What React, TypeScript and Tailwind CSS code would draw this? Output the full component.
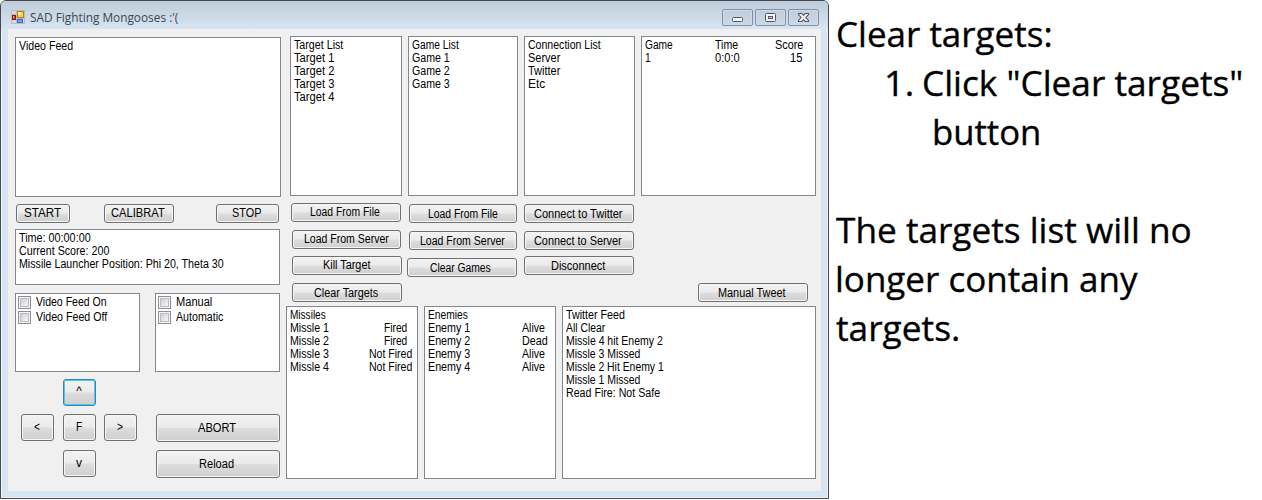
import { useLayoutEffect, useRef, useState } from "react";
import type { ReactNode } from "react";
import clsx from "clsx";

/* A single line of text condensed or widened to an exact width. */
function Fit({ w, children, className }: { w: number; children: string; className?: string }) {
  const ref = useRef<HTMLSpanElement>(null);
  const [scale, setScale] = useState(1);
  useLayoutEffect(() => {
    if (ref.current && ref.current.offsetWidth > 0) {
      setScale(w / ref.current.offsetWidth);
    }
  }, [w, children]);
  return (
    <span className={clsx("block shrink-0 whitespace-nowrap", className)} style={{ width: w }}>
      <span ref={ref} className="inline-block origin-left whitespace-nowrap" style={{ transform: `scaleX(${scale})` }}>
        {children}
      </span>
    </span>
  );
}

function Btn({ label, w, className, focus }: { label: string; w: number; className: string; focus?: boolean }) {
  return (
    <button
      className={clsx(
        "flex shrink-0 items-center justify-center rounded-[3px] border bg-[linear-gradient(to_bottom,#f2f2f2_0%,#ebebeb_48%,#dddddd_52%,#cfcfcf_100%)] leading-[13px]",
        focus
          ? "border-[#3c7fb1] shadow-[inset_0_0_0_1px_#48cdf4]"
          : "border-[#707070] shadow-[inset_0_0_0_1px_#f6f6f6]",
        className,
      )}
    >
      <Fit w={w}>{label}</Fit>
    </button>
  );
}

function Box({ className, children }: { className: string; children?: ReactNode }) {
  return (
    <div className={clsx("shrink-0 border border-[#828790] bg-white pt-[2px] pl-[3px] leading-[13px]", className)}>
      {children}
    </div>
  );
}

function Lines({ rows }: { rows: [string, number][] }) {
  return (
    <>
      {rows.map(([t, w], i) => (
        <Fit key={i} w={w}>{t}</Fit>
      ))}
    </>
  );
}

function Check({ label, w }: { label: string; w: number }) {
  return (
    <div className="flex h-[15px] items-start">
      <span className="mr-[5px] flex size-[13px] items-center justify-center border border-[#8e8f8f] bg-[#f4f4f4]">
        <span className="size-[9px] border border-[#b8bdc4] bg-linear-to-br from-[#cbcfd5] to-[#f6f6f6]" />
      </span>
      <Fit w={w}>{label}</Fit>
    </div>
  );
}

function AppIcon() {
  return (
    <svg width="14" height="14" viewBox="0 0 14 14" className="shrink-0" shapeRendering="crispEdges">
      <path d="M0 0h14v14H0z" fill="#b9bdc1" />
      <path d="M1 1h4v3H1zM1 10h4v3H1zM6 9h7v4H6z" fill="#d3dae0" />
      <rect x="6" y="1" width="7" height="7" fill="#b58218" />
      <rect x="7" y="2" width="5" height="5" fill="#fbcf45" />
      <rect x="7" y="2" width="3" height="3" fill="#fdea9a" />
      <rect x="1" y="5" width="4" height="5" fill="#8d160e" />
      <rect x="2" y="6" width="2" height="3" fill="#d8392a" />
      <rect x="2" y="6" width="1" height="2" fill="#ff9a83" />
      <rect x="6" y="9" width="6" height="4" fill="#3f68b8" />
      <rect x="7" y="10" width="4" height="2" fill="#6ba3f5" />
    </svg>
  );
}

function CaptionButton({ children }: { children: ReactNode }) {
  return (
    <span className="flex h-[17px] w-[31px] items-center justify-center rounded-[2px] border border-[#8090a8] bg-linear-to-b from-[#c0cddb] to-[#cbd8e6] shadow-[inset_0_0_0_1px_#d0dbe8]">
      <svg width="13" height="11" viewBox="0 0 13 11">{children}</svg>
    </span>
  );
}

function TitleBar() {
  return (
    <div className="flex h-[28px] shrink-0 items-start justify-between bg-linear-to-b from-[#bfcddb] to-[#d7e4f2] pr-[9px] pl-[10px]">
      <div className="flex pt-[9px]">
        <AppIcon />
        <div className="ml-[5px] font-['Open_Sans','Noto_Sans',sans-serif] text-[12px] leading-[16px] text-[#3c4652]">
          <Fit w={148}>SAD Fighting Mongooses :'(</Fit>
        </div>
      </div>
      <div className="flex gap-[2px] pt-[8px]">
        <CaptionButton>
          <rect x="1.5" y="5.5" width="10" height="4" rx="1" fill="#f5f5f5" stroke="#535666" />
        </CaptionButton>
        <CaptionButton>
          <rect x="1.5" y="1.5" width="10" height="8" rx="1" fill="#f5f5f5" stroke="#535666" />
          <rect x="4.5" y="4.5" width="4" height="2" fill="#c9d5e2" stroke="#535666" />
        </CaptionButton>
        <CaptionButton>
          <path d="M1.5 1.5h3.2l1.8 1.7 1.8-1.7h3.2v1L8.9 5.5l2.6 3v1H8.3L6.5 7.8 4.7 9.5H1.5v-1l2.6-3-2.6-3z" fill="#f5f5f5" stroke="#535666" strokeWidth="1.1" />
        </CaptionButton>
      </div>
    </div>
  );
}

function LeftColumn() {
  return (
    <div className="flex w-[266px] shrink-0 flex-col pt-[8px]">
      <Box className="h-[160px] w-[266px]"><Fit w={54}>Video Feed</Fit></Box>
      <div className="mt-[7px] flex pl-px">
        <Btn label="START" w={37} className="h-[19px] w-[54px] pr-[2px]" />
        <Btn label="CALIBRAT" w={54} className="ml-[34px] h-[19px] w-[70px] pr-[2px]" />
        <Btn label="STOP" w={29} className="ml-[42px] h-[19px] w-[63px] pr-[2px]" />
      </div>
      <Box className="mt-[6px] h-[56px] w-[265px]">
        <Lines rows={[["Time: 00:00:00", 72], ["Current Score: 200", 90], ["Missile Launcher Position: Phi 20, Theta 30", 205]]} />
      </Box>
      <div className="mt-[8px] flex gap-[15px]">
        <Box className="h-[79px] w-[125px] !pl-[2px]">
          <Check label="Video Feed On" w={71} />
          <Check label="Video Feed Off" w={71} />
        </Box>
        <Box className="h-[79px] w-[125px] !pl-[2px]">
          <Check label="Manual" w={36} />
          <Check label="Automatic" w={47} />
        </Box>
      </div>
      <div className="mt-[7px] pl-[48px]">
        <Btn label="^" w={6} focus className="h-[27px] w-[33px] pr-px pb-[2px]" />
      </div>
      <div className="mt-[8px] flex pl-[6px]">
        <Btn label="<" w={6} className="h-[27px] w-[33px] pr-px" />
        <Btn label="F" w={6} className="ml-[9px] h-[27px] w-[33px] pr-px" />
        <Btn label=">" w={6} className="ml-[8px] h-[27px] w-[33px] pr-px" />
        <Btn label="ABORT" w={38} className="ml-[19px] h-[28px] w-[124px] pr-[2px]" />
      </div>
      <div className="mt-[8px] flex pl-[48px]">
        <Btn label="v" w={6} className="h-[27px] w-[33px] pr-px" />
        <Btn label="Reload" w={35} className="ml-[60px] h-[28px] w-[124px] pr-[3px]" />
      </div>
    </div>
  );
}

function StatusRow({ name, w, state, sw, pad }: { name: string; w: number; state: string; sw: number; pad: string }) {
  return (
    <div className={clsx("flex justify-between", pad)}>
      <Fit w={w}>{name}</Fit>
      <Fit w={sw}>{state}</Fit>
    </div>
  );
}

function RightArea() {
  return (
    <div className="ml-[5px] flex w-[530px] shrink-0 flex-col pt-[7px]">
      <div className="flex h-[270px] pl-[4px]">
        <div className="flex w-[112px] flex-col">
          <Box className="h-[160px] w-[112px]">
            <Lines rows={[["Target List", 49], ["Target 1", 40], ["Target 2", 40], ["Target 3", 40], ["Target 4", 40]]} />
          </Box>
          <Btn label="Load From File" w={70} className="mt-[7px] ml-px h-[19px] w-[110px] pr-[2px]" />
          <Btn label="Load From Server" w={85} className="mt-[8px] ml-[2px] h-[19px] w-[109px] pr-px" />
          <Btn label="Kill Target" w={47} className="mt-[7px] ml-[2px] h-[19px] w-[110px] pr-[2px]" />
          <Btn label="Clear Targets" w={64} className="mt-[8px] ml-[2px] h-[19px] w-[110px] pr-[2px] pt-px" />
        </div>
        <div className="ml-[6px] flex w-[110px] flex-col">
          <Box className="h-[160px] w-[110px] !pl-[3px]">
            <Lines rows={[["Game List", 47], ["Game 1", 38], ["Game 2", 38], ["Game 3", 38]]} />
          </Box>
          <Btn label="Load From File" w={70} className="mt-[8px] ml-px h-[19px] w-[108px] pt-px" />
          <Btn label="Load From Server" w={85} className="mt-[8px] ml-px h-[19px] w-[108px] pr-[2px] pt-px" />
          <Btn label="Clear Games" w={61} className="mt-[8px] -ml-px h-[19px] w-[110px] pr-[3px] pt-px" />
        </div>
        <div className="ml-[6px] flex w-[111px] flex-col">
          <Box className="h-[160px] w-[111px] !pl-[3px]">
            <Lines rows={[["Connection List", 73], ["Server", 32], ["Twitter", 32], ["Etc", 17]]} />
          </Box>
          <Btn label="Connect to Twitter" w={89} className="mt-[8px] h-[19px] w-[110px] pr-[2px] pt-px" />
          <Btn label="Connect to Server" w={88} className="mt-[8px] h-[19px] w-[110px] pr-[2px] pt-px" />
          <Btn label="Disconnect" w={54} className="mt-[6px] h-[19px] w-[110px] pr-[2px] pt-px" />
        </div>
        <div className="ml-[6px] flex w-[175px] flex-col justify-between pb-[4px]">
          <Box className="h-[160px] w-[175px] !pl-[3px]">
            <div className="flex">
              <Fit w={28}>Game</Fit>
              <Fit w={23} className="ml-[42px]">Time</Fit>
              <Fit w={28} className="ml-[37px]">Score</Fit>
            </div>
            <div className="flex">
              <Fit w={6}>1</Fit>
              <Fit w={25} className="ml-[64px]">0:0:0</Fit>
              <Fit w={12} className="ml-[50px]">15</Fit>
            </div>
          </Box>
          <Btn label="Manual Tweet" w={68} className="ml-[57px] h-[19px] w-[110px] pr-[2px] pt-px" />
        </div>
      </div>
      <div className="flex gap-[6px]">
        <Box className="h-[173px] w-[132px]">
          <Fit w={36}>Missiles</Fit>
          <StatusRow name="Missle 1" w={39} state="Fired" sw={23} pad="pr-[10px]" />
          <StatusRow name="Missle 2" w={39} state="Fired" sw={23} pad="pr-[10px]" />
          <StatusRow name="Missle 3" w={39} state="Not Fired" sw={43} pad="pr-[5px]" />
          <StatusRow name="Missle 4" w={39} state="Not Fired" sw={43} pad="pr-[5px]" />
        </Box>
        <Box className="h-[173px] w-[132px]">
          <Fit w={40}>Enemies</Fit>
          <StatusRow name="Enemy 1" w={42} state="Alive" sw={23} pad="pr-[10px]" />
          <StatusRow name="Enemy 2" w={42} state="Dead" sw={26} pad="pr-[7px]" />
          <StatusRow name="Enemy 3" w={42} state="Alive" sw={23} pad="pr-[10px]" />
          <StatusRow name="Enemy 4" w={42} state="Alive" sw={23} pad="pr-[10px]" />
        </Box>
        <Box className="h-[173px] w-[254px]">
          <Lines
            rows={[
              ["Twitter Feed", 59], ["All Clear", 39], ["Missle 4 hit Enemy 2", 97], ["Missle 3 Missed", 74],
              ["Missle 2 Hit Enemy 1", 98], ["Missle 1 Missed", 74], ["Read Fire: Not Safe", 94],
            ]}
          />
        </Box>
      </div>
    </div>
  );
}

export default function App() {
  return (
    <div className="flex h-[500px] w-[1262px] overflow-hidden bg-white font-['Liberation_Sans',Arial,sans-serif] text-[12px] text-black">
      <div className="flex h-[499px] w-[829px] shrink-0 flex-col overflow-hidden rounded-t-[6px] border border-[#45484c] bg-[#d7e4f2] shadow-[inset_0_0_0_1px_#eef4fa]">
        <TitleBar />
        <div className="ml-[7px] flex h-[462px] w-[813px] bg-[#f0f0f0] pl-[7px]">
          <LeftColumn />
          <RightArea />
        </div>
      </div>
      <div className="ml-[7px] flex flex-col pt-[9px] font-['Open_Sans','Noto_Sans',sans-serif] text-[35px] leading-[49px] [-webkit-text-stroke:0.35px_black]">
        <Fit w={217}>Clear targets:</Fit>
        <div className="flex pl-[48px]">
          <Fit w={30}>1.</Fit>
          <Fit w={321} className="ml-[8px]">Click "Clear targets"</Fit>
        </div>
        <Fit w={109} className="ml-[96px]">button</Fit>
        <Fit w={356} className="mt-[49px]">The targets list will no</Fit>
        <Fit w={302} className="-ml-px">longer contain any</Fit>
        <Fit w={124}>targets.</Fit>
      </div>
    </div>
  );
}
